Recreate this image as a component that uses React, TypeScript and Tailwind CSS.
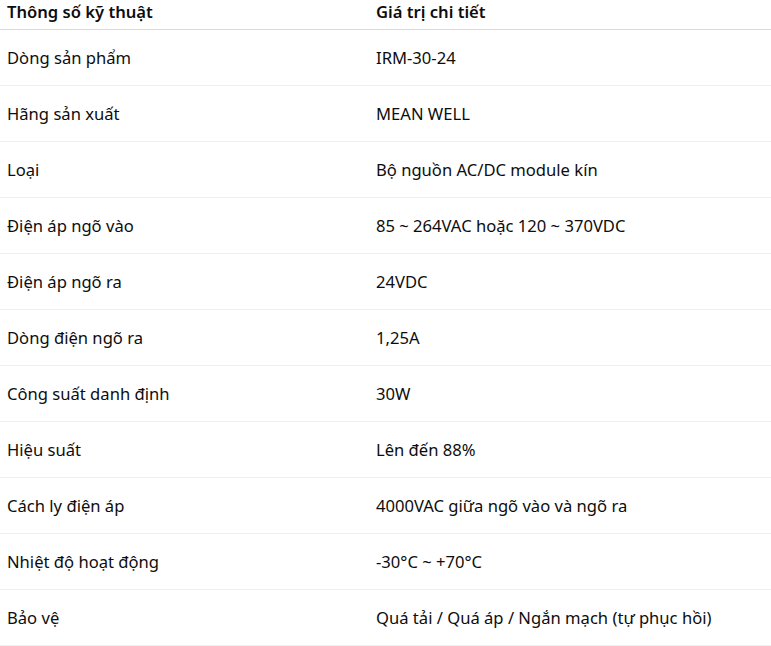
import React from 'react';

const rows: Array<[string, string]> = [
  ['Dòng sản phẩm', 'IRM-30-24'],
  ['Hãng sản xuất', 'MEAN WELL'],
  ['Loại', 'Bộ nguồn AC/DC module kín'],
  ['Điện áp ngõ vào', '85 ~ 264VAC hoặc 120 ~ 370VDC'],
  ['Điện áp ngõ ra', '24VDC'],
  ['Dòng điện ngõ ra', '1,25A'],
  ['Công suất danh định', '30W'],
  ['Hiệu suất', 'Lên đến 88%'],
  ['Cách ly điện áp', '4000VAC giữa ngõ vào và ngõ ra'],
  ['Nhiệt độ hoạt động', '-30°C ~ +70°C'],
  ['Bảo vệ', 'Quá tải / Quá áp / Ngắn mạch (tự phục hồi)'],
];

const App: React.FC = () => {
  return (
    <div className="w-[771px] bg-white font-['Segoe_UI','Noto_Sans',sans-serif] text-[16.6px] text-[#0d0d0d]">
      <table className="w-full border-collapse text-left">
        <thead>
          <tr className="h-[29px] border-b border-[#d9d9d9]">
            <th className="w-[369px] pl-[7px] pb-[5px] align-top font-semibold leading-6">Thông số kỹ thuật</th>
            <th className="pl-[7px] pb-[5px] align-top font-semibold leading-6">Giá trị chi tiết</th>
          </tr>
        </thead>
        <tbody>
          {rows.map(([k, v]) => (
            <tr key={k} className="h-[56px] border-b border-[#efefef]">
              <td className="pl-[7px] align-middle leading-6">{k}</td>
              <td className="pl-[7px] align-middle leading-6">{v}</td>
            </tr>
          ))}
        </tbody>
      </table>
    </div>
  );
};

export default App;
